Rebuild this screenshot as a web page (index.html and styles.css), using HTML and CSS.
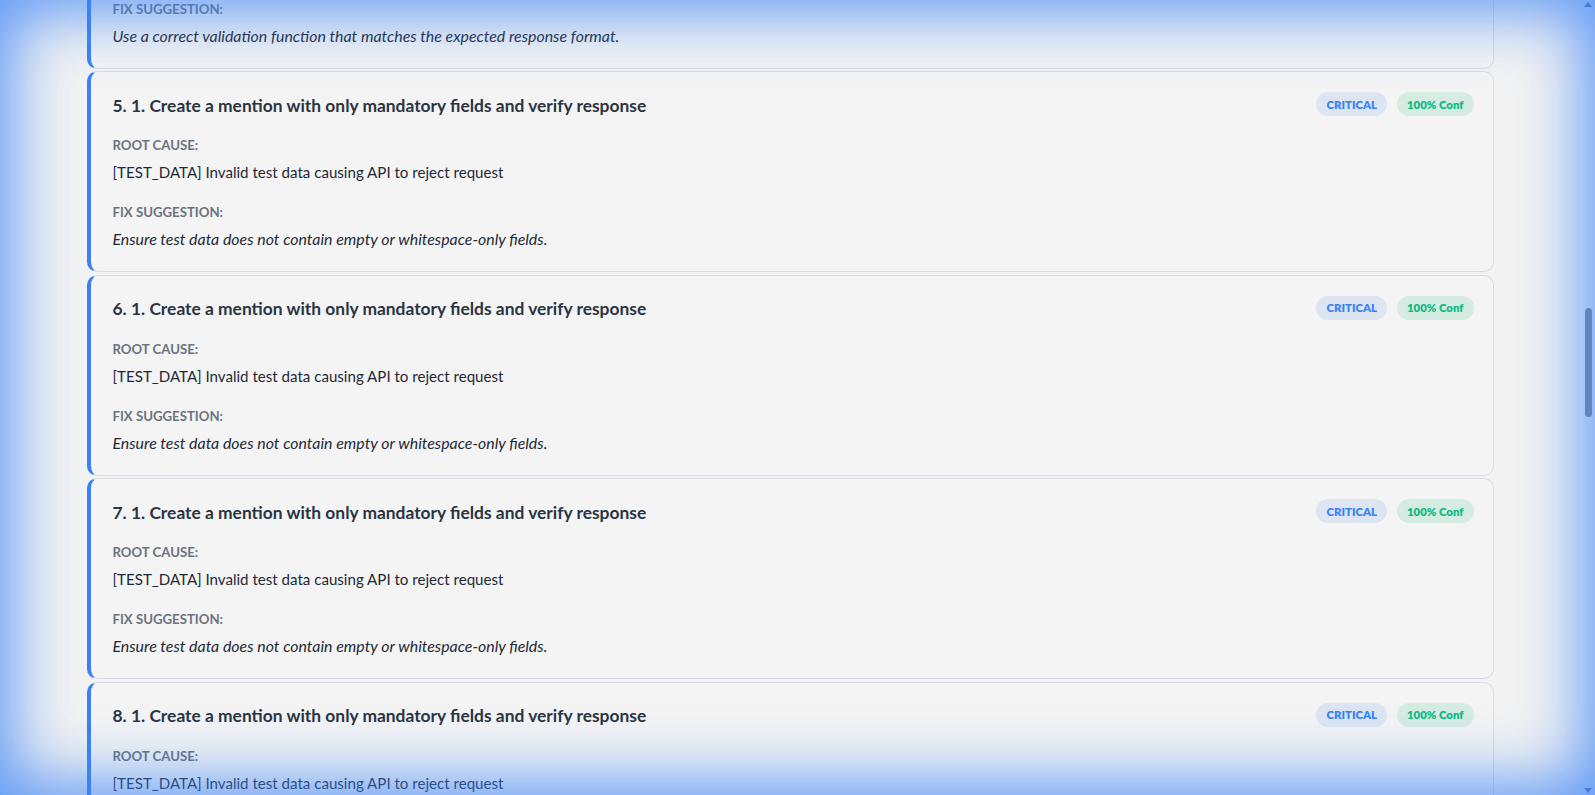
FILE: index.html
```html
<!DOCTYPE html>
<html lang="en">
<head>
<meta charset="utf-8">
<title>Failure Analysis</title>
<link rel="stylesheet" href="styles.css">
</head>
<body>
<div class="app">
  <main class="content">
    <div class="list">
      <article class="card">
        <header class="card-head">
          <h3 class="card-title">4. 1. Create a mention and validate the response schema</h3>
          <div class="badges">
            <span class="badge badge-sev">CRITICAL</span>
            <span class="badge badge-conf">100% Conf</span>
          </div>
        </header>
        <section class="sec">
          <div class="sec-label">ROOT CAUSE:</div>
          <div class="sec-text">[ASSERTION] Response validation function does not match the API response</div>
        </section>
        <section class="sec">
          <div class="sec-label">FIX SUGGESTION:</div>
          <div class="sec-text fix">Use a correct validation function that matches the expected response format.</div>
        </section>
      </article>

      <article class="card">
        <header class="card-head">
          <h3 class="card-title">5. 1. Create a mention with only mandatory fields and verify response</h3>
          <div class="badges">
            <span class="badge badge-sev">CRITICAL</span>
            <span class="badge badge-conf">100% Conf</span>
          </div>
        </header>
        <section class="sec">
          <div class="sec-label">ROOT CAUSE:</div>
          <div class="sec-text">[TEST_DATA] Invalid test data causing API to reject request</div>
        </section>
        <section class="sec">
          <div class="sec-label">FIX SUGGESTION:</div>
          <div class="sec-text fix">Ensure test data does not contain empty or whitespace-only fields.</div>
        </section>
      </article>

      <article class="card">
        <header class="card-head">
          <h3 class="card-title">6. 1. Create a mention with only mandatory fields and verify response</h3>
          <div class="badges">
            <span class="badge badge-sev">CRITICAL</span>
            <span class="badge badge-conf">100% Conf</span>
          </div>
        </header>
        <section class="sec">
          <div class="sec-label">ROOT CAUSE:</div>
          <div class="sec-text">[TEST_DATA] Invalid test data causing API to reject request</div>
        </section>
        <section class="sec">
          <div class="sec-label">FIX SUGGESTION:</div>
          <div class="sec-text fix">Ensure test data does not contain empty or whitespace-only fields.</div>
        </section>
      </article>

      <article class="card">
        <header class="card-head">
          <h3 class="card-title">7. 1. Create a mention with only mandatory fields and verify response</h3>
          <div class="badges">
            <span class="badge badge-sev">CRITICAL</span>
            <span class="badge badge-conf">100% Conf</span>
          </div>
        </header>
        <section class="sec">
          <div class="sec-label">ROOT CAUSE:</div>
          <div class="sec-text">[TEST_DATA] Invalid test data causing API to reject request</div>
        </section>
        <section class="sec">
          <div class="sec-label">FIX SUGGESTION:</div>
          <div class="sec-text fix">Ensure test data does not contain empty or whitespace-only fields.</div>
        </section>
      </article>

      <article class="card">
        <header class="card-head">
          <h3 class="card-title">8. 1. Create a mention with only mandatory fields and verify response</h3>
          <div class="badges">
            <span class="badge badge-sev">CRITICAL</span>
            <span class="badge badge-conf">100% Conf</span>
          </div>
        </header>
        <section class="sec">
          <div class="sec-label">ROOT CAUSE:</div>
          <div class="sec-text">[TEST_DATA] Invalid test data causing API to reject request</div>
        </section>
        <section class="sec">
          <div class="sec-label">FIX SUGGESTION:</div>
          <div class="sec-text fix">Ensure test data does not contain empty or whitespace-only fields.</div>
        </section>
      </article>
    </div>
  </main>

  <div class="scrollbar" aria-hidden="true">
    <div class="sb-btn"><span class="tri tri-up"></span></div>
    <div class="sb-track">
      <div class="sb-thumb" style="margin-top:293px;height:109px"></div>
    </div>
    <div class="sb-btn"><span class="tri tri-down"></span></div>
  </div>
</div>
<div class="glow" aria-hidden="true"></div>
</body>
</html>
```
FILE: styles.css
```css
* { box-sizing: border-box; }

html, body {
  margin: 0;
  height: 100%;
  overflow: hidden;
}

body {
  font-family: "Lato", "Liberation Sans", sans-serif;
  background: #f3f3f3;
  color: #1f2937;
}

.app {
  display: flex;
  height: 100vh;
}

.content {
  flex: 1;
  overflow: hidden;
}

.list {
  width: 1407px;
  margin: -132.5px auto 0;
  display: flex;
  flex-direction: column;
  gap: 2.5px;
}

.card {
  background: #f4f4f4;
  border: 1px solid #d9dde3;
  border-left: 4px solid #3b82f6;
  border-radius: 10px;
  padding: 20px 19px 20px 22px;
}

.card-head {
  display: flex;
  align-items: center;
  justify-content: space-between;
  height: 24px;
}

.card-title {
  margin: 0;
  padding-top: 3px;
  font-size: 17.4px;
  font-weight: 700;
  color: #2a3443;
  line-height: 24px;
  white-space: nowrap;
}

.badges {
  display: flex;
  gap: 10px;
}

.badge {
  display: inline-flex;
  align-items: center;
  height: 24px;
  padding: 0 10px;
  border-radius: 12px;
  font-size: 11.4px;
  font-weight: 800;
}

.badge-sev {
  background: #dde5f3;
  color: #3b82f6;
}

.badge-conf {
  background: #d5ece2;
  color: #10b981;
}

.sec {
  margin-top: 18px;
}

.card-head + .sec {
  margin-top: 19px;
}

.sec-label {
  font-size: 13.2px;
  font-weight: 700;
  color: #6b7280;
  line-height: 20px;
}

.sec-text {
  margin-top: 5px;
  font-size: 15.1px;
  line-height: 24px;
  color: #1f2937;
  white-space: nowrap;
}

.sec-text.fix {
  font-style: italic;
  font-size: 15.9px;
}

.scrollbar {
  width: 15px;
  display: flex;
  flex-direction: column;
}

.sb-btn {
  height: 15px;
  display: flex;
  align-items: center;
  justify-content: center;
  padding-left: 1px;
}

.tri {
  width: 0;
  height: 0;
  border-left: 4px solid transparent;
  border-right: 4px solid transparent;
}

.tri-up { border-bottom: 5px solid #5a6f94; margin-top: -6px; }
.tri-down { border-top: 5px solid #5a6f94; margin-top: 6px; }

.sb-track {
  flex: 1;
  padding-left: 5px;
}

.sb-thumb {
  width: 7px;
  border-radius: 4px;
  background: #7f8896;
}

.glow {
  position: fixed;
  inset: 0;
  pointer-events: none;
  box-shadow: inset 0 0 65px 12px rgba(59, 130, 246, 0.82);
}
```
